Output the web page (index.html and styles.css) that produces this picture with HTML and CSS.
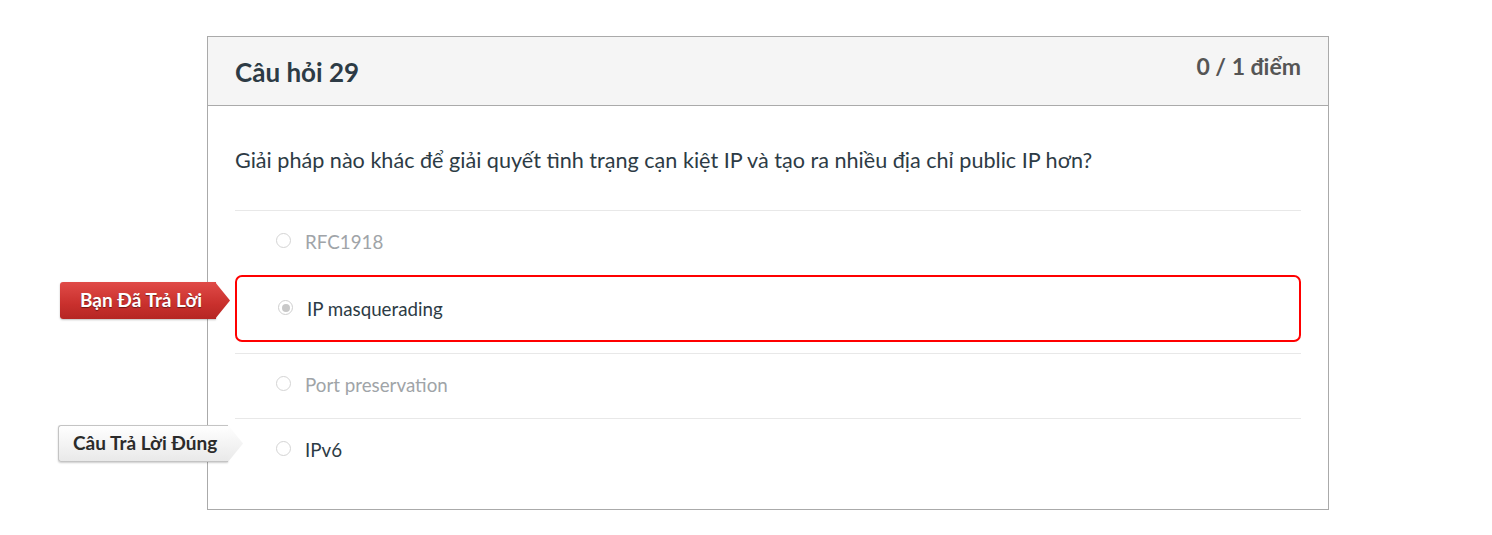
FILE: index.html
```html
<!DOCTYPE html>
<html lang="vi">
<head>
<meta charset="utf-8">
<link rel="stylesheet" href="styles.css">
</head>
<body>
<div class="question">
  <div class="header">
    <span class="name">Câu hỏi 29</span>
    <span class="points">0 / 1 điểm</span>
  </div>
  <div class="content">
    <div class="text">Giải pháp nào khác để giải quyết tình trạng cạn kiệt IP và tạo ra nhiều địa chỉ public IP hơn?</div>
    <div class="answers">
      <div class="answer faded">
        <span class="radio"></span><span class="label">RFC1918</span>
      </div>
      <div class="answer selected">
        <span class="arrow arrow-red">Bạn Đã Trả Lời</span>
        <span class="radio checked"></span><span class="label">IP masquerading</span>
      </div>
      <div class="answer faded">
        <span class="radio"></span><span class="label">Port preservation</span>
      </div>
      <div class="answer correct">
        <span class="arrow arrow-gray">Câu Trả Lời Đúng</span>
        <span class="radio"></span><span class="label">IPv6</span>
      </div>
    </div>
  </div>
</div>
</body>
</html>
```
FILE: styles.css
```css
* { box-sizing: border-box; }
body {
  margin: 0;
  background: #fff;
  font-family: Lato, "Noto Sans", sans-serif;
  color: #2d3b45;
}
.question {
  margin: 36px 0 0 207px;
  width: 1122px;
  border: 1px solid #aaaaaa;
}
.header {
  height: 69px;
  background: #f5f5f5;
  border-bottom: 1px solid #aaaaaa;
  display: flex;
  justify-content: space-between;
  padding: 0 27px 0 27px;
}
.name {
  font-size: 26px;
  font-weight: 700;
  margin-top: 19px;
  line-height: 32px;
}
.points {
  font-size: 23px;
  font-weight: 700;
  color: #555555;
  margin-top: 14px;
  line-height: 30px;
}
.content {
  padding: 40px 27px 26px 27px;
}
.text {
  font-size: 21.6px;
  line-height: 28px;
  margin-bottom: 36px;
}
.answers {
  display: flex;
  flex-direction: column;
}
.answer {
  position: relative;
  display: flex;
  align-items: center;
  height: 65px;
  border-top: 1px solid #e8e8e8;
  padding-left: 41px;
  padding-bottom: 3px;
  font-size: 18.75px;
}
.answer.faded { color: #a0a4a8; }
.answer.selected {
  border: 2px solid #ff0000;
  border-radius: 7px;
  height: 67px;
  margin-bottom: 11px;
  padding-left: 41px;
  padding-bottom: 0;
}
.answer.correct { color: #2d3b45; }
.radio {
  width: 15px;
  height: 15px;
  border-radius: 50%;
  border: 1px solid #d4d4d4;
  background: #fff;
  margin-right: 14px;
  flex: none;
  position: relative;
  top: -1px;
}
.radio.checked {
  border-color: #cfcfcf;
}
.radio.checked::after {
  content: "";
  position: absolute;
  left: 2.5px;
  top: 2.5px;
  width: 8px;
  height: 8px;
  border-radius: 50%;
  background: #c8c8c8;
}
.label { line-height: 24px; }

.arrow {
  position: absolute;
  font-weight: 700;
  font-size: 19px;
  height: 37px;
  line-height: 35px;
  white-space: nowrap;
}
.arrow::after {
  content: "";
  position: absolute;
  top: 0;
  height: 100%;
  width: 15px;
  clip-path: polygon(0 0, 100% 50%, 0 100%);
}
.arrow-red {
  left: -177px;
  top: 5px;
  width: 156px;
  padding-left: 20px;
  color: #fff;
  text-shadow: 0 1px 1px rgba(0,0,0,0.45);
  background: linear-gradient(#e04b48, #c9302d 60%, #b52623);
  border-radius: 3px 0 0 3px;
  box-shadow: 0 1px 2px rgba(0,0,0,0.25);
}
.arrow-red::after {
  right: -14px;
  background: linear-gradient(#e04b48, #c9302d 60%, #b52623);
}
.arrow-gray {
  left: -177px;
  top: 6px;
  width: 170px;
  color: #2b2b2b;
  padding-left: 14px;
  background: linear-gradient(#ffffff, #e9e9e9);
  border: 1px solid #c4c4c4;
  border-right: none;
  border-radius: 3px 0 0 3px;
  line-height: 33px;
  box-shadow: 0 1px 2px rgba(0,0,0,0.2);
}
.arrow-gray::after {
  right: -15px;
  top: -1px;
  height: 37px;
  background: linear-gradient(#ffffff, #e9e9e9);
}
```
